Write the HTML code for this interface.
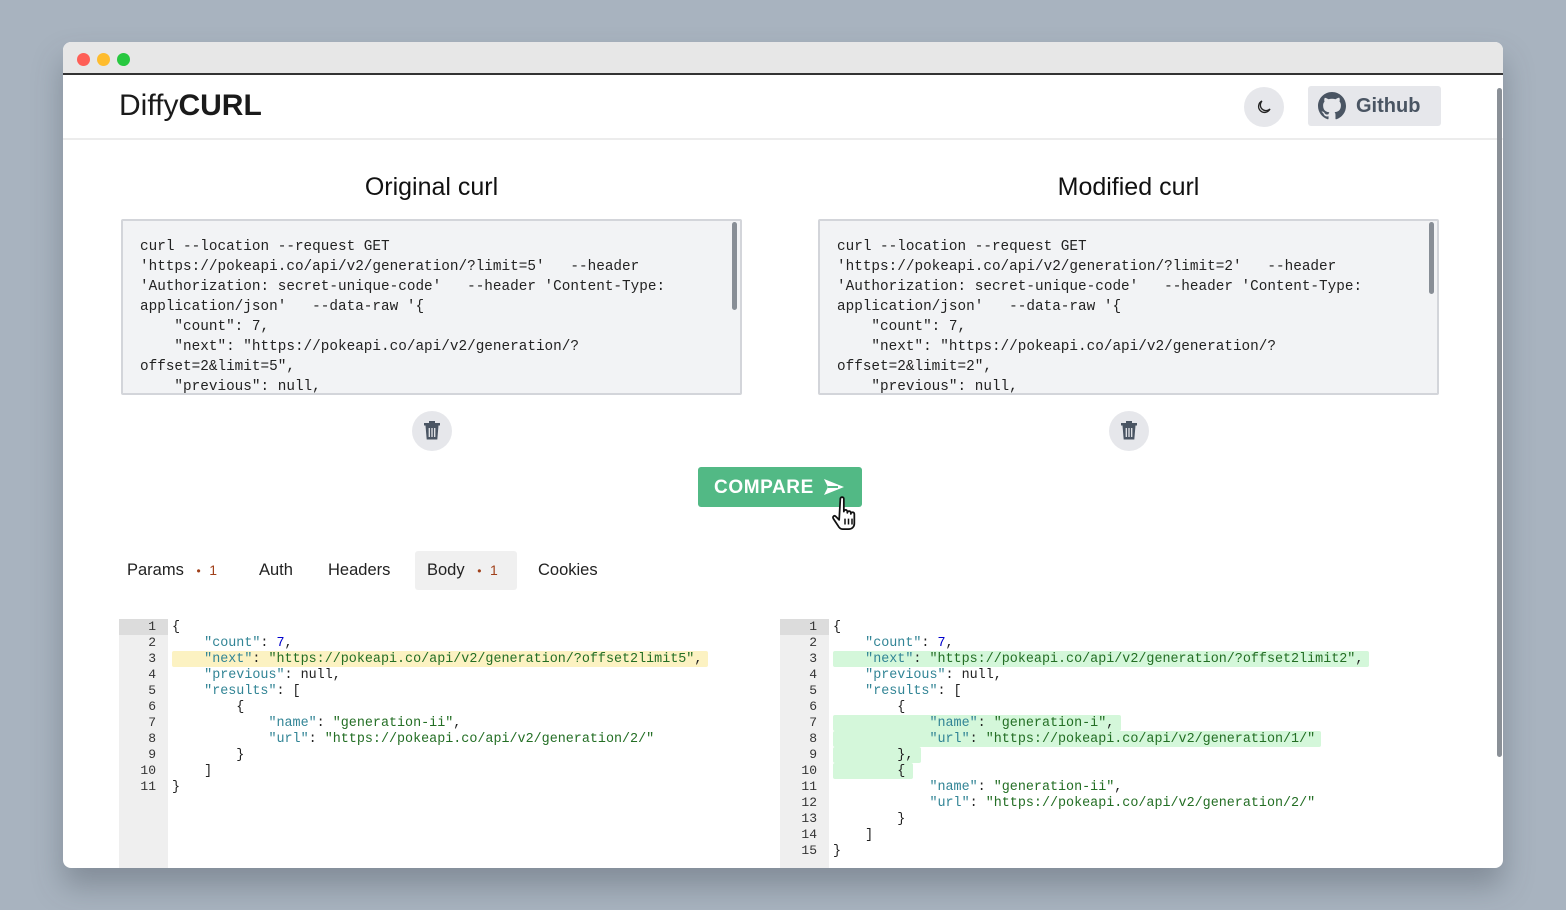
<!DOCTYPE html>
<html><head><meta charset="utf-8"><style>
*{margin:0;padding:0;box-sizing:border-box}
body{width:1566px;height:910px;background:#a8b3bf;font-family:"Liberation Sans",sans-serif;position:relative;overflow:hidden}
.win{position:absolute;left:63px;top:42px;width:1440px;height:826px;background:#fff;border-radius:8px;overflow:hidden;box-shadow:0 18px 30px rgba(60,70,80,.35)}
.tb{position:absolute;left:0;top:0;width:100%;height:33px;background:#e7e7e7;border-bottom:2px solid #333}
.dot{position:absolute;top:11px;width:13px;height:13px;border-radius:50%}
.hdr{position:absolute;left:0;top:33px;width:100%;height:65px;border-bottom:2px solid #ececec}
.abs{position:absolute}
.ta{position:absolute;width:621px;height:176px;background:#f2f3f5;border:2px solid #d3d5da;border-radius:2px;overflow:hidden}
.ta pre{position:absolute;left:17px;top:16px;font-family:"Liberation Mono",monospace;font-size:14.35px;line-height:20px;color:#222;white-space:pre}
.sb{position:absolute;right:3px;top:1px;width:5px;height:88px;background:#888e96;border-radius:3px}
.trash{position:absolute;width:40px;height:40px;border-radius:50%;background:#e6e7eb}
.h2{position:absolute;font-size:25px;color:#111;text-align:center;width:621px}
.ed{position:absolute;top:577px;height:249px}
.gut{position:absolute;top:0;left:0;width:49px;height:100%;background:#efefef}
.ln{position:absolute;left:0;width:49px;height:16px;font-family:"Liberation Mono",monospace;font-size:13px;line-height:16px;color:#333;text-align:right;padding-right:12px}
.code{position:absolute;left:53px;font-family:"Liberation Mono",monospace;font-size:13.4px;line-height:16px;white-space:pre;color:#222}
.k{color:#318495}.s{color:#236e24}.n{color:#0000cd}
.hl{position:absolute;height:16px;border-radius:2px}
.tab{position:absolute;top:509px;height:39px;line-height:39px;font-size:16.5px;color:#222;padding:0 12px}
</style></head><body>
<div class="win">
 <div class="tb"><div class="dot" style="left:14px;background:#fe5f57"></div><div class="dot" style="left:34px;background:#febc2e"></div><div class="dot" style="left:54px;background:#28c840"></div></div>
 <div class="hdr">
  <div class="abs" style="left:56px;top:14px;font-size:30px;color:#1a1a1a">Diffy<b>CURL</b></div>
  <div class="abs" style="left:1181px;top:12px;width:40px;height:40px;border-radius:50%;background:#e6e7eb">
   <svg width="40" height="40" viewBox="0 0 40 40"><path d="M18 14a6 6 0 1 0 8 8a5 5 0 0 1-8-8z" fill="none" stroke="#222" stroke-width="1.3"/></svg></div>
  <div class="abs" style="left:1245px;top:11px;width:133px;height:40px;border-radius:3px;background:#e6e7eb">
   <svg class="abs" style="left:10px;top:6px" width="28" height="28" viewBox="0 0 16 16"><path fill="#4a5563" d="M8 0C3.58 0 0 3.58 0 8c0 3.54 2.29 6.53 5.47 7.59.4.07.55-.17.55-.38v-1.33c-2.23.48-2.7-1.07-2.7-1.07-.36-.92-.89-1.17-.89-1.17-.73-.5.06-.49.06-.49.8.06 1.23.83 1.23.83.71 1.22 1.87.87 2.33.66.07-.52.28-.87.51-1.07-1.78-.2-3.64-.89-3.64-3.95 0-.87.31-1.59.82-2.15-.08-.2-.36-1.02.08-2.12 0 0 .67-.21 2.2.82A7.6 7.6 0 0 1 8 3.86c.68 0 1.36.09 2 .27 1.53-1.04 2.2-.82 2.2-.82.44 1.1.16 1.92.08 2.12.51.56.82 1.27.82 2.15 0 3.07-1.87 3.75-3.65 3.95.29.25.54.73.54 1.48v2.2c0 .21.15.46.55.38A8.01 8.01 0 0 0 16 8c0-4.42-3.58-8-8-8z"/></svg>
   <div class="abs" style="left:48px;top:9px;font-size:20px;font-weight:bold;color:#4a5563">Github</div></div>
 </div>
 <div class="abs" style="right:1px;top:46px;width:5px;height:669px;background:#8a9097;border-radius:3px"></div>

 <div class="h2" style="left:58px;top:131px">Original curl</div>
 <div class="h2" style="left:755px;top:131px">Modified curl</div>
 <div class="ta" style="left:58px;top:177px"><pre>curl --location --request GET
'https://pokeapi.co/api/v2/generation/?limit=5'   --header
'Authorization: secret-unique-code'   --header 'Content-Type:
application/json'   --data-raw '{
    "count": 7,
    "next": "https://pokeapi.co/api/v2/generation/?
offset=2&amp;limit=5",
    "previous": null,</pre><div class="sb"></div></div>
 <div class="ta" style="left:755px;top:177px"><pre>curl --location --request GET
'https://pokeapi.co/api/v2/generation/?limit=2'   --header
'Authorization: secret-unique-code'   --header 'Content-Type:
application/json'   --data-raw '{
    "count": 7,
    "next": "https://pokeapi.co/api/v2/generation/?
offset=2&amp;limit=2",
    "previous": null,</pre><div class="sb" style="height:72px"></div></div>
 <div class="trash" style="left:349px;top:369px"><svg width="40" height="40" viewBox="0 0 40 40"><path d="M12 12h16v2.5H12zM17 10h6v2h-6z" fill="#4a5563"/><path d="M13.5 14.5h13l-1.2 14H14.7z" fill="#4a5563"/><path d="M17.3 17v9M20 17v9M22.7 17v9" stroke="#e6e7eb" stroke-width="1.3"/></svg></div>
 <div class="trash" style="left:1046px;top:369px"><svg width="40" height="40" viewBox="0 0 40 40"><path d="M12 12h16v2.5H12zM17 10h6v2h-6z" fill="#4a5563"/><path d="M13.5 14.5h13l-1.2 14H14.7z" fill="#4a5563"/><path d="M17.3 17v9M20 17v9M22.7 17v9" stroke="#e6e7eb" stroke-width="1.3"/></svg></div>

 <div class="abs" style="left:635px;top:425px;width:164px;height:40px;background:#52b985;border-radius:3px;color:#fff;font-weight:bold;font-size:19px;line-height:41px;padding-left:16px;letter-spacing:.6px">COMPARE
  <svg class="abs" style="left:125px;top:11px" width="22" height="18" viewBox="0 0 22 18"><path d="M1 1l20 8L1 17l4-8z" fill="#fff"/><path d="M5 9h10" stroke="#52b985" stroke-width="2"/></svg></div>
 <svg class="abs" style="left:768px;top:451px" width="42" height="42" viewBox="0 0 36 36"><path d="M8 5c0-2 3-2 3 0v11c0-2 3-2 3 0v1c0-2 3-2 3 0v1c0-2 3-2 3 0v8c0 3-2 5-5 5h-5c-2 0-3-1-4-3l-4-6c-1-2 1-3 2-2l3 3z" fill="#fff" stroke="#111" stroke-width="1.5" stroke-linejoin="round"/><path d="M12 22v5M15 22v5M18 22v5" stroke="#111" stroke-width="1.3"/></svg>

 <div class="tab" style="left:52px">Params <span style="color:#a0401a;font-size:12px;margin-left:8px">•</span> <span style="color:#a0401a;font-size:14px;margin-left:4px">1</span></div>
 <div class="tab" style="left:184px">Auth</div>
 <div class="tab" style="left:253px">Headers</div>
 <div class="tab" style="left:352px;background:#f0f0f0;border-radius:3px;width:102px">Body <span style="color:#a0401a;font-size:12px;margin-left:8px">•</span> <span style="color:#a0401a;font-size:14px;margin-left:4px">1</span></div>
 <div class="tab" style="left:463px">Cookies</div>

 <div class="ed" style="left:56px;width:600px">
  <div class="gut"></div>
  <div class="abs" style="left:0;top:0;width:49px;height:16px;background:#dcdcdc"></div>
  <div class="hl" style="left:53px;top:32px;width:536px;background:#fcf2c2"></div>
  <div class="ln" style="top:0">1</div><div class="ln" style="top:16px">2</div><div class="ln" style="top:32px">3</div><div class="ln" style="top:48px">4</div><div class="ln" style="top:64px">5</div><div class="ln" style="top:80px">6</div><div class="ln" style="top:96px">7</div><div class="ln" style="top:112px">8</div><div class="ln" style="top:128px">9</div><div class="ln" style="top:144px">10</div><div class="ln" style="top:160px">11</div>
  <div class="code" style="top:1px">{
    <span class="k">"count"</span>: <span class="n">7</span>,
    <span class="k">"next"</span>: <span class="s">"https://pokeapi.co/api/v2/generation/?offset2limit5"</span>,
    <span class="k">"previous"</span>: null,
    <span class="k">"results"</span>: [
        {
            <span class="k">"name"</span>: <span class="s">"generation-ii"</span>,
            <span class="k">"url"</span>: <span class="s">"https://pokeapi.co/api/v2/generation/2/"</span>
        }
    ]
}</div>
 </div>

 <div class="ed" style="left:717px;width:700px">
  <div class="gut"></div>
  <div class="abs" style="left:0;top:0;width:49px;height:16px;background:#dcdcdc"></div>
  <div class="hl" style="left:53px;top:32px;width:536px;background:#d4f7da"></div>
  <div class="hl" style="left:53px;top:96px;width:288px;background:#d4f7da"></div>
  <div class="hl" style="left:53px;top:112px;width:488px;background:#d4f7da"></div>
  <div class="hl" style="left:53px;top:128px;width:88px;background:#d4f7da"></div>
  <div class="hl" style="left:53px;top:144px;width:80px;background:#d4f7da"></div>
  <div class="ln" style="top:0">1</div><div class="ln" style="top:16px">2</div><div class="ln" style="top:32px">3</div><div class="ln" style="top:48px">4</div><div class="ln" style="top:64px">5</div><div class="ln" style="top:80px">6</div><div class="ln" style="top:96px">7</div><div class="ln" style="top:112px">8</div><div class="ln" style="top:128px">9</div><div class="ln" style="top:144px">10</div><div class="ln" style="top:160px">11</div><div class="ln" style="top:176px">12</div><div class="ln" style="top:192px">13</div><div class="ln" style="top:208px">14</div><div class="ln" style="top:224px">15</div>
  <div class="code" style="top:1px">{
    <span class="k">"count"</span>: <span class="n">7</span>,
    <span class="k">"next"</span>: <span class="s">"https://pokeapi.co/api/v2/generation/?offset2limit2"</span>,
    <span class="k">"previous"</span>: null,
    <span class="k">"results"</span>: [
        {
            <span class="k">"name"</span>: <span class="s">"generation-i"</span>,
            <span class="k">"url"</span>: <span class="s">"https://pokeapi.co/api/v2/generation/1/"</span>
        },
        {
            <span class="k">"name"</span>: <span class="s">"generation-ii"</span>,
            <span class="k">"url"</span>: <span class="s">"https://pokeapi.co/api/v2/generation/2/"</span>
        }
    ]
}</div>
 </div>
</div>
</body></html>
